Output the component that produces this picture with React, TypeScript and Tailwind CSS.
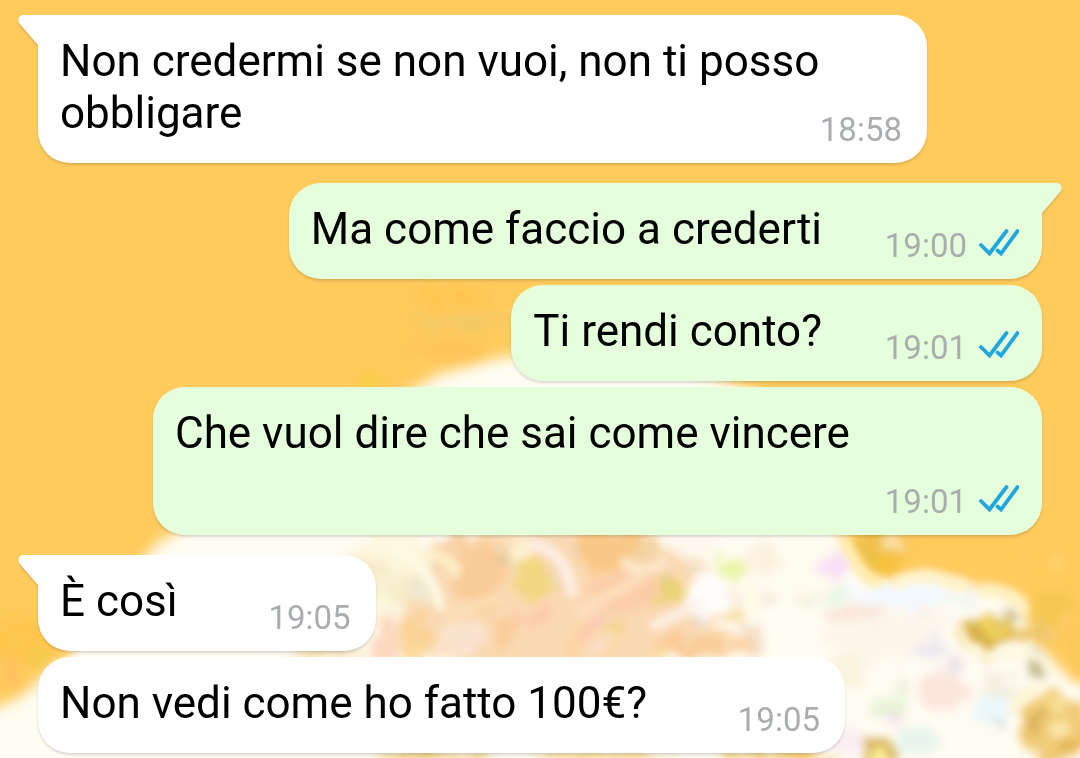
import clsx from 'clsx'

// ─── Types ────────────────────────────────────────────────────────────────────

interface Message {
  id: number
  text: string
  time: string
  mine: boolean
  first: boolean
}

// [x, y, rx, ry, colour, opacity]
type Blob = [number, number, number, number, string, number]

// [path, colour, width]
type Streak = [string, string, number]

// ─── Data ─────────────────────────────────────────────────────────────────────

const MESSAGES: Message[] = [
  { id: 1, text: 'Non credermi se non vuoi, non ti posso obbligare', time: '18:58', mine: false, first: true },
  { id: 2, text: 'Ma come faccio a crederti', time: '19:00', mine: true, first: true },
  { id: 3, text: 'Ti rendi conto?', time: '19:01', mine: true, first: false },
  { id: 4, text: 'Che vuol dire che sai come vincere', time: '19:01', mine: true, first: false },
  { id: 5, text: 'È così', time: '19:05', mine: false, first: true },
  { id: 6, text: 'Non vedi come ho fatto 100€?', time: '19:05', mine: false, first: false },
]

const BLOBS: Blob[] = [
  // orange sky
  [450, 297, 40, 8, '#ffc44c', 0.9],
  [465, 320, 55, 10, '#edc765', 0.7],
  [445, 350, 40, 8, '#fcc058', 0.7],
  [375, 380, 14, 6, '#f5cf3e', 0.9],
  [30, 640, 40, 26, '#ffc548', 0.7],
  [40, 664, 12, 10, '#eccc4c', 0.7],
  [8, 672, 12, 14, '#ffbf60', 0.8],
  [1050, 606, 22, 16, '#f2c64e', 0.8],
  [1058, 563, 10, 8, '#ffd878', 0.8],
  [1026, 568, 6, 6, '#fbd27a', 0.6],
  [1074, 655, 8, 26, '#f8c65a', 0.9],
  // peach centre
  [560, 600, 165, 80, '#fad7ae', 0.95],
  [480, 575, 24, 34, '#f9c890', 0.8],
  [610, 546, 36, 22, '#fac683', 0.95],
  [630, 590, 44, 20, '#fbcda6', 0.9],
  [388, 640, 14, 30, '#fbd5b8', 0.9],
  [418, 640, 16, 22, '#fad08a', 0.8],
  [505, 636, 14, 20, '#fbc48e', 0.7],
  [700, 645, 48, 10, '#f9c890', 0.9],
  [535, 616, 20, 8, '#fbc0a8', 0.7],
  [456, 542, 14, 6, '#f5c898', 0.8],
  [612, 630, 12, 9, '#f5d487', 0.8],
  [575, 640, 12, 18, '#fbd6a2', 0.8],
  // cream on the left of the centre
  [395, 555, 34, 26, '#fdf6dc', 0.9],
  [396, 588, 20, 20, '#f6efcd', 0.9],
  [422, 590, 10, 16, '#eeead2', 0.9],
  [436, 563, 8, 5, '#dfd3b0', 0.7],
  [360, 568, 24, 14, '#f5e6c0', 0.8],
  [460, 636, 24, 16, '#fae6d6', 0.8],
  // spot ringed in white
  [520, 552, 18, 16, '#fdeccd', 0.9],
  [505, 560, 8, 8, '#dfca98', 0.9],
  [534, 580, 20, 19, '#f2d780', 1],
  [568, 552, 6, 7, '#ddc9a6', 0.7],
  // white right of the centre
  [690, 545, 36, 14, '#fdf8ee', 1],
  [645, 552, 14, 10, '#eed3a0', 0.9],
  [710, 595, 30, 24, '#fffdfb', 1],
  [730, 569, 15, 12, '#e9f5a6', 1],
  [700, 567, 7, 5, '#e6e4cc', 0.7],
  [669, 592, 15, 16, '#e9d474', 1],
  [665, 577, 7, 4, '#cfc58a', 0.7],
  [733, 595, 10, 10, '#fbe9da', 0.8],
  [735, 614, 12, 10, '#f3dc9c', 0.9],
  [697, 620, 10, 4, '#dde0ea', 0.8],
  [754, 637, 9, 14, '#f3dcc2', 0.9],
  [660, 652, 12, 6, '#fbe2a0', 0.8],
  // faint tints in the white mass
  [765, 560, 22, 16, '#fcf0de', 0.9],
  [800, 575, 24, 40, '#fffcee', 0.9],
  [770, 594, 8, 14, '#f0e6d2', 0.8],
  [805, 600, 14, 8, '#efecda', 0.8],
  [833, 566, 14, 15, '#f8dcf6', 0.9],
  [842, 596, 22, 8, '#e7f6e4', 0.9],
  [900, 597, 50, 14, '#f2f9ff', 1],
  [855, 616, 28, 8, '#fbe0d4', 0.9],
  [880, 640, 60, 22, '#fcf6ea', 0.9],
  [930, 616, 22, 6, '#fbece4', 0.8],
  [960, 600, 14, 8, '#eef4f2', 0.8],
  [932, 648, 14, 10, '#e8e4f0', 0.8],
  [955, 664, 10, 8, '#eadfe4', 0.8],
  [942, 690, 22, 20, '#fce2d8', 0.9],
  [850, 670, 18, 20, '#f8f3d8', 0.9],
  [890, 708, 18, 12, '#e2f3cf', 0.8],
  [902, 690, 8, 9, '#e9e6d2', 0.8],
  [893, 722, 10, 6, '#efd9ea', 0.7],
  [918, 738, 20, 12, '#e1f3ea', 0.8],
  [1000, 690, 18, 14, '#f1ecdd', 0.9],
  [990, 712, 18, 18, '#e9f7fb', 0.9],
  [1000, 726, 7, 7, '#d5dada', 0.9],
  [850, 742, 18, 14, '#f9eaf2', 0.8],
  // golden spots
  [880, 550, 23, 24, '#efc04a', 1],
  [888, 566, 14, 9, '#f6c23c', 1],
  [893, 541, 8, 7, '#fbe0b0', 0.9],
  [987, 634, 26, 16, '#d9b24a', 1],
  [992, 630, 11, 8, '#fbdf63', 1],
  [1011, 616, 10, 6, '#b9a878', 0.9],
  [1036, 632, 22, 12, '#ecc66a', 1],
  [1054, 630, 9, 7, '#fbcb86', 0.9],
  [1039, 667, 12, 11, '#c5bc90', 1],
  [1054, 728, 34, 37, '#f0ca76', 1],
  [1042, 712, 8, 9, '#fadf8c', 0.9],
  [1034, 722, 7, 11, '#d9ae58', 0.9],
  [1058, 706, 7, 8, '#faeaa8', 0.9],
  [1060, 730, 9, 8, '#fbe9ae', 0.9],
  [1070, 746, 10, 8, '#e2b050', 0.8],
  [1034, 746, 8, 7, '#f9e6b4', 0.9],
  [880, 752, 20, 14, '#d2ab50', 1],
  [881, 758, 9, 8, '#f9ec93', 1],
  // strip under the last reply
  [440, 758, 60, 7, '#f0cb7c', 0.9],
  [600, 758, 70, 7, '#f8d898', 0.9],
  [780, 758, 60, 7, '#f4ca70', 0.9],
  [330, 655, 40, 5, '#f5d9a2', 0.8],
]

const STREAKS: Streak[] = [
  ['M415 560Q440 545 456 572', '#fdf3cc', 9],
  ['M392 545Q432 568 440 606', '#fdfbe6', 10],
  ['M380 570L379 620', '#fcf3d0', 6],
  ['M514 556L526 548', '#fdf6d0', 9],
  ['M534 544Q566 552 572 592', '#fdf0ea', 11],
  ['M552 566L558 588', '#ecd9b0', 5],
  ['M624 562Q642 578 664 562', '#fdebcf', 8],
  ['M580 612L640 578', '#fde0c2', 9],
  ['M655 625L700 604', '#fdf2ea', 10],
  ['M450 616L500 596', '#fbdfb6', 10],
  ['M582 640Q590 622 604 618', '#fbc4b4', 6],
  ['M590 652L612 636', '#fde0d0', 7],
  ['M752 584V610', '#fff9dc', 7],
  ['M846 540Q856 572 880 582', '#fff3bd', 9],
  ['M895 582L925 574L965 584', '#fff8d6', 9],
  ['M985 590Q1018 590 1024 610', '#fff4c6', 9],
  ['M960 630Q968 657 995 657Q1030 642 1050 668', '#fff8dc', 9],
  ['M1014 708Q1022 692 1040 688', '#fff3cc', 8],
]

// ─── Wallpaper ────────────────────────────────────────────────────────────────

function Wallpaper() {
  return (
    <svg
      className="absolute inset-0 -z-10 h-full w-full"
      viewBox="0 0 1080 758"
      preserveAspectRatio="xMidYMid slice"
      aria-hidden="true"
    >
      <defs>
        <filter id="edge" x="-5%" y="-5%" width="110%" height="110%" colorInterpolationFilters="sRGB">
          <feGaussianBlur stdDeviation="7" />
        </filter>
        <filter id="soft" x="-5%" y="-5%" width="110%" height="110%" colorInterpolationFilters="sRGB">
          <feTurbulence type="fractalNoise" baseFrequency="0.05" numOctaves="2" seed="5" result="noise" />
          <feDisplacementMap in="SourceGraphic" in2="noise" scale="34" xChannelSelector="R" yChannelSelector="G" />
          <feGaussianBlur stdDeviation="5" />
        </filter>
        <filter id="streak" x="-5%" y="-5%" width="110%" height="110%" colorInterpolationFilters="sRGB">
          <feGaussianBlur stdDeviation="4" />
        </filter>
      </defs>
      <rect width="1080" height="758" fill="#ffcb5d" />
      <path
        d="M-20 712L15 700L35 685L52 665L110 600L155 545L260 480L405 394L440 374L500 358L620 340L760 394L800 460L840 530L855 565L880 586L905 578L930 576L960 584L1000 590L1022 600L1028 615L1034 640L1058 668L1100 694V780H-20Z"
        fill="#fffcf2"
        filter="url(#edge)"
      />
      <g filter="url(#soft)">
        {BLOBS.map(([cx, cy, rx, ry, fill, opacity], i) => (
          <ellipse key={i} cx={cx} cy={cy} rx={rx} ry={ry} fill={fill} opacity={opacity} />
        ))}
      </g>
      <g filter="url(#streak)" fill="none" strokeLinecap="round">
        {STREAKS.map(([d, stroke, width]) => (
          <path key={d} d={d} stroke={stroke} strokeWidth={width} />
        ))}
      </g>
    </svg>
  )
}

// ─── Bubble parts ─────────────────────────────────────────────────────────────

function Tail({ mine }: { mine: boolean }) {
  return (
    <svg
      className={clsx(
        'absolute top-0 h-[30px] w-[22px]',
        mine ? '-right-5 -scale-x-100 fill-[#e5ffdc]' : '-left-5 fill-white',
      )}
      viewBox="0 0 22 30"
      aria-hidden="true"
    >
      <path d="M22 0H5.5C1 0-1 5 1.5 8.5L20 30H22Z" />
    </svg>
  )
}

function ReadTicks() {
  return (
    <svg
      className="mb-2 h-7 w-10"
      viewBox="0 0 40 28"
      fill="none"
      stroke="#1fa6de"
      strokeWidth="3.8"
      strokeLinecap="round"
      role="img"
      aria-label="Letto"
    >
      <path d="M2 17L10.5 25.5L27.5 3" />
      <path d="M18.5 22.5L22 25.5L38.5 3" />
    </svg>
  )
}

function Bubble({ text, time, mine, first }: Message) {
  return (
    <li
      className={clsx(
        'relative grid max-w-[889px] rounded-[32px] drop-shadow-[0_2px_1px_rgba(0,0,0,0.14)]',
        mine ? 'self-end bg-[#e5ffdc]' : 'self-start bg-white',
        first && 'mt-[14px] first:mt-0',
        first && (mine ? 'rounded-tr-none' : 'rounded-tl-none'),
      )}
    >
      {first && <Tail mine={mine} />}
      <p className="col-start-1 row-start-1 px-[22px] pt-5 pb-6 text-[44px] leading-[52px] text-black">
        {text}
        {/* keeps the last line clear of the time */}
        <span className={clsx('inline-block h-px', mine ? 'w-[198px]' : 'w-[176px]')} />
      </p>
      <div
        className={clsx(
          'col-start-1 row-start-1 flex items-center gap-3 self-end justify-self-end pb-[13px]',
          mine ? 'pr-[23px]' : 'pr-[25px]',
        )}
      >
        <time className="text-[33px] leading-10 text-[#a9adaf]">{time}</time>
        {mine && <ReadTicks />}
      </div>
    </li>
  )
}

// ─── App ──────────────────────────────────────────────────────────────────────

export default function App() {
  return (
    <main className="relative isolate min-h-screen overflow-hidden font-[Roboto,sans-serif]">
      <Wallpaper />
      <ol className="flex flex-col gap-[6px] px-[38px] pt-[15px]">
        {MESSAGES.map(message => (
          <Bubble key={message.id} {...message} />
        ))}
      </ol>
    </main>
  )
}
